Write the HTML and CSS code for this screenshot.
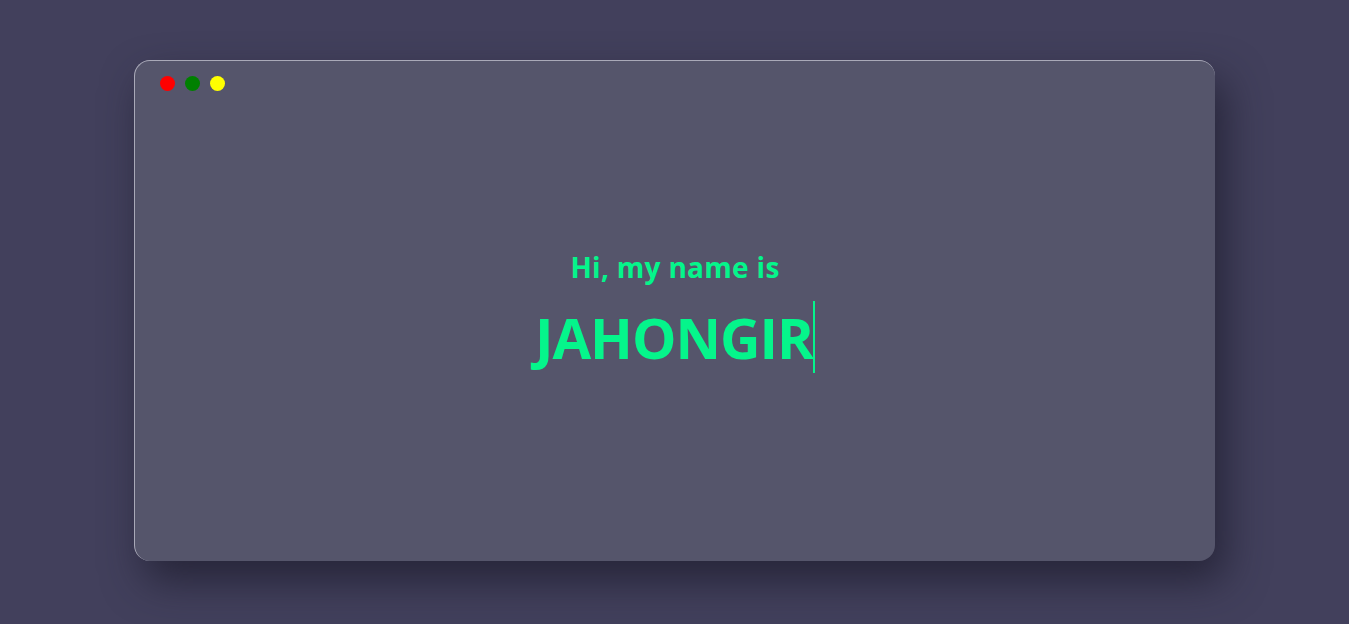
FILE: index.html
```html
<!DOCTYPE html>
<html lang="en">
<head>
<meta charset="utf-8">
<title>Jahongir</title>
<link rel="stylesheet" href="styles.css">
</head>
<body>
<div class="window">
  <div class="bar">
    <span class="dot red"></span>
    <span class="dot green"></span>
    <span class="dot yellow"></span>
  </div>
  <div class="content">
    <h2 class="intro">Hi, my name is</h2>
    <h1 class="name"><span class="typed">JAHONGIR</span></h1>
  </div>
</div>
</body>
</html>
```
FILE: styles.css
```css
html, body {
  margin: 0;
  height: 100%;
}
body {
  background: #42405c;
  font-family: "Open Sans", "Noto Sans", sans-serif;
  display: flex;
  justify-content: center;
  align-items: flex-start;
  padding-top: 60px;
  box-sizing: border-box;
}
.window {
  width: 1081px;
  height: 501px;
  box-sizing: border-box;
  background: #55556b;
  border-radius: 16px;
  border-top: 1px solid #a9a9b8;
  border-left: 1px solid #a9a9b8;
  box-shadow: 10px 20px 40px rgba(30, 28, 45, 0.75);
  display: flex;
  flex-direction: column;
}
.bar {
  display: flex;
  gap: 10px;
  padding: 15px 0 0 25px;
}
.dot {
  width: 15px;
  height: 15px;
  border-radius: 50%;
}
.red { background: #ff0000; }
.green { background: #008000; }
.yellow { background: #ffff00; }
.content {
  flex: 1;
  display: flex;
  flex-direction: column;
  align-items: center;
  justify-content: center;
  padding-bottom: 30px;
}
.intro {
  margin: 0;
  color: #05f58b;
  font-size: 28px;
  font-weight: 700;
  line-height: 36px;
  letter-spacing: 0.3px;
}
.name {
  margin: 16px 0 0;
  color: #05f58b;
  font-size: 56px;
  font-weight: 700;
  line-height: 72px;
  letter-spacing: -1px;
}
.typed {
  display: inline-block;
  border-right: 2px solid #05f58b;
}
```
